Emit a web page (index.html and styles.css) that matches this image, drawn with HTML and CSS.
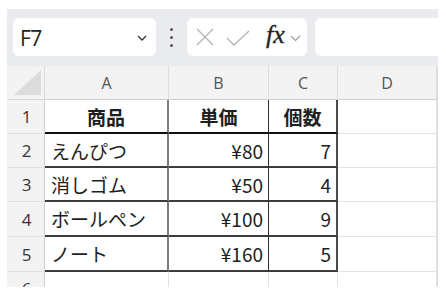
FILE: index.html
```html
<!DOCTYPE html>
<html lang="ja">
<head>
<meta charset="utf-8">
<link rel="stylesheet" href="styles.css">
</head>
<body>
<div class="app">
  <div class="toolbar">
    <div class="namebox">
      <span class="ref">F7</span>
      <svg class="chev" width="10" height="6" viewBox="0 0 10 6"><path d="M1 1 L5 5 L9 1" fill="none" stroke="#333" stroke-width="1.3"/></svg>
    </div>
    <div class="dots"><i></i><i></i><i></i></div>
    <div class="fgroup">
      <svg width="18" height="18" viewBox="0 0 18 18" class="ic-x"><path d="M1 1 L17 17 M17 1 L1 17" stroke="#b5b5b5" stroke-width="1.4" fill="none"/></svg>
      <svg width="24" height="16" viewBox="0 0 24 16" class="ic-ok"><path d="M1 8 L8 15 L23 1" stroke="#b5b5b5" stroke-width="1.4" fill="none"/></svg>
      <span class="fx">fx</span>
      <svg class="chev2" width="11" height="7" viewBox="0 0 11 7"><path d="M1 1 L5.5 5.5 L10 1" fill="none" stroke="#9a9a9a" stroke-width="1.1"/></svg>
    </div>
    <div class="finput"></div>
  </div>
  <div class="sheet">
    <div class="corner"><span class="tri"></span></div>
    <div class="ch">A</div><div class="ch">B</div><div class="ch">C</div><div class="ch">D</div>

    <div class="rh">1</div>
    <div class="c t ta hd">商品</div><div class="c t tb hd">単価</div><div class="c t tc hd">個数</div><div class="c"></div>

    <div class="rh">2</div>
    <div class="c t ta">えんぴつ</div><div class="c t tb num">¥80</div><div class="c t tc num">7</div><div class="c"></div>

    <div class="rh">3</div>
    <div class="c t ta">消しゴム</div><div class="c t tb num">¥50</div><div class="c t tc num">4</div><div class="c"></div>

    <div class="rh">4</div>
    <div class="c t ta">ボールペン</div><div class="c t tb num">¥100</div><div class="c t tc num">9</div><div class="c"></div>

    <div class="rh">5</div>
    <div class="c t ta">ノート</div><div class="c t tb num">¥160</div><div class="c t tc num">5</div><div class="c"></div>

    <div class="rh">6</div>
    <div class="c"></div><div class="c"></div><div class="c"></div><div class="c"></div>
  </div>
</div>
</body>
</html>
```
FILE: styles.css
```css
html, body { margin: 0; padding: 0; background: #fff; }
body { width: 446px; height: 298px; overflow: hidden; }
.app {
  margin: 9px 0 0 7px;
  width: 431px;
  height: 278px;
  overflow: hidden;
  background: #e8eaed;
  font-family: "Noto Sans CJK JP", sans-serif;
}
.toolbar {
  height: 57px;
  display: flex;
  align-items: flex-start;
  padding: 9px 0 0 6px;
  box-sizing: border-box;
  background: #e9ebee;
}
.namebox {
  width: 143px; height: 38px;
  background: #fff;
  border-radius: 6px;
  display: flex; align-items: center; justify-content: space-between;
  padding: 0 9px 0 7px;
  box-sizing: border-box;
  flex: none;
}
.ref { font-family: "Open Sans", "Noto Sans", sans-serif; font-size: 21px; color: #222; letter-spacing: -0.5px; margin-top: 2px; }
.chev { margin-top: 2px; }
.dots {
  width: 31px; height: 38px; flex: none;
  display: flex; flex-direction: column; align-items: center; justify-content: center; gap: 5px;
}
.dots i { width: 3px; height: 3px; border-radius: 50%; background: #555; display: block; }
.fgroup {
  width: 120px; height: 38px; flex: none;
  background: #fff; border-radius: 6px;
  display: flex; align-items: center;
  padding-left: 9px; box-sizing: border-box;
}
.ic-x { margin-right: 12px; }
.ic-ok { margin-right: 16px; margin-top: 2px; }
.fx { font-family: "Liberation Serif", "DejaVu Serif", serif; font-style: italic; font-weight: 400; font-size: 26px; color: #222; letter-spacing: 0; margin-right: 5px; margin-top: -4px; -webkit-text-stroke: 0.3px #222; }
.chev2 { margin-top: 2px; }
.finput {
  margin-left: 8px;
  width: 140px; height: 38px; flex: none;
  background: #fff; border-radius: 6px;
}
.sheet {
  display: grid;
  grid-template-columns: 38px 124px 100px 69px 99px;
  grid-template-rows: 34px 34px 34px 34px 35px 35px 34px 20px;
  background: #fff;
  border-right: 1px solid #dcdcdc;
  width: 431px;
  box-sizing: border-box;
}
.corner { background: #f3f3f3; border-right: 1px solid #d9d9d9; border-bottom: 1px solid #d9d9d9; position: relative; }
.tri {
  position: absolute; right: 3px; bottom: 4px;
  width: 0; height: 0;
  border-left: 27px solid transparent;
  border-bottom: 25px solid #dcdcdc;
}
.ch {
  background: #f3f3f3;
  border-right: 1px solid #dcdcdc;
  border-bottom: 1px solid #d0d0d0;
  display: flex; align-items: center; justify-content: center;
  font-family: "Open Sans", "Noto Sans", sans-serif; font-size: 16px; color: #555;
}
.rh {
  background: #f3f3f3;
  border-right: 1px solid #d0d0d0;
  border-bottom: 1px solid #dedede;
  display: flex; align-items: center; justify-content: center;
  font-family: "Open Sans", "Noto Sans", sans-serif; font-size: 17px; color: #333;
  padding-left: 2px;
}
.c {
  border-right: 1px solid #e2e2e2;
  border-bottom: 1px solid #e2e2e2;
  display: flex; align-items: center;
  font-size: 19px; color: #1e1e1e;
  padding: 0 6px 0 6px;
  white-space: nowrap;
  box-sizing: border-box;
}
.t { border-bottom: 2px solid #3c3c3c; }
.ta { border-right: 2px solid #7d7d7d; }
.tb { border-right: 1.5px solid #2e2e2e; }
.tc { border-right: 2px solid #4a4a4a; }
.hd { font-weight: 700; justify-content: center; border-bottom-color: #111; padding: 0; }
.num { justify-content: flex-end; padding-right: 5px; }
```
